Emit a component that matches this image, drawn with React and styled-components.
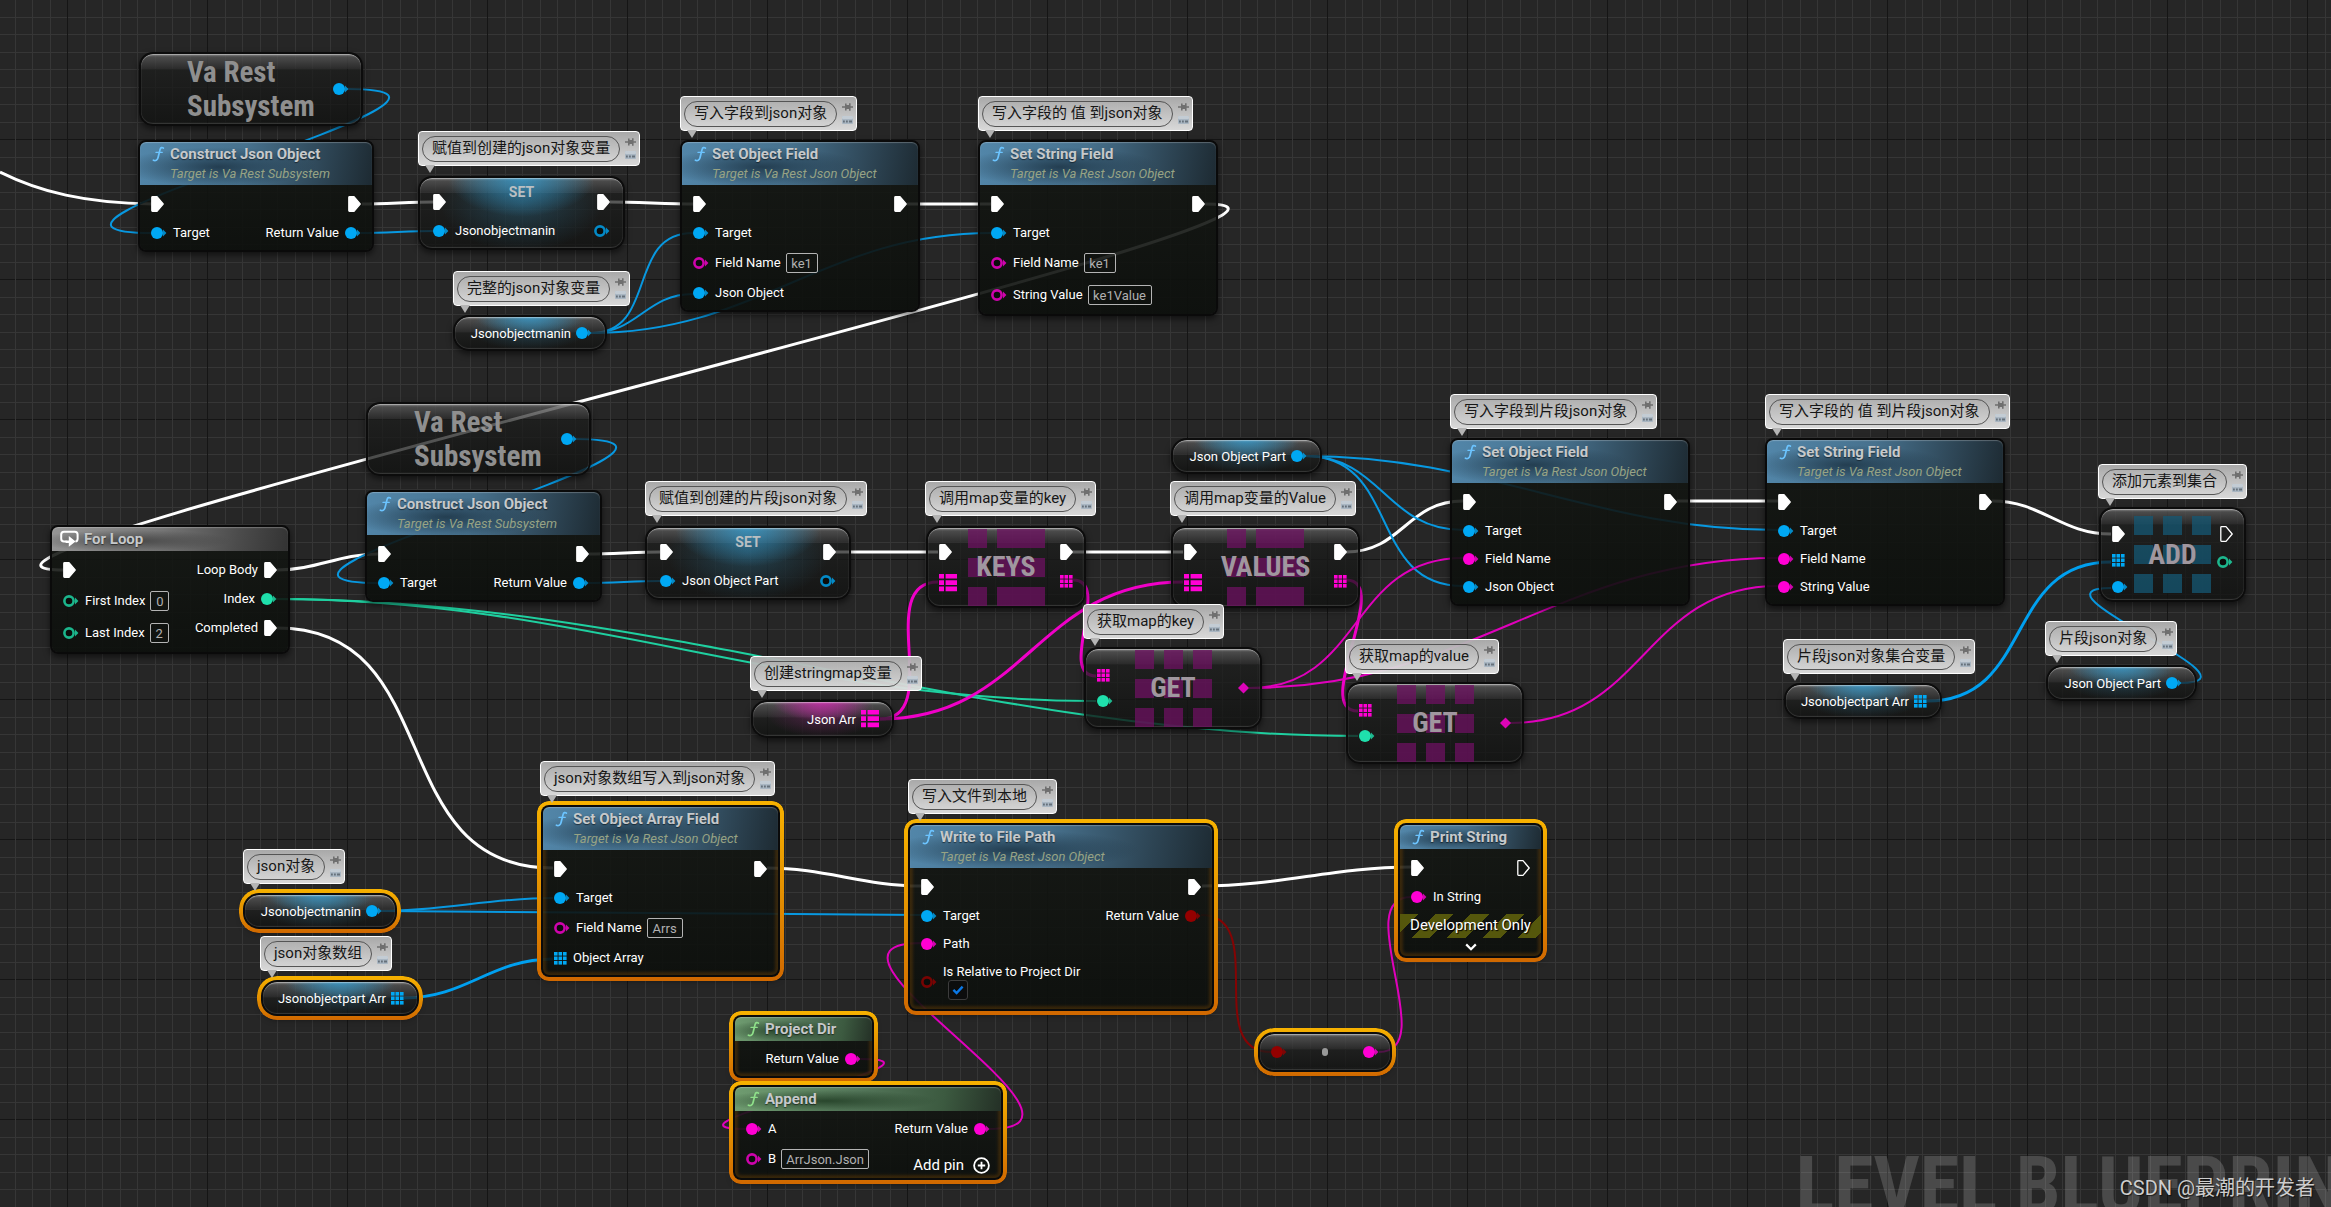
import React, { useState } from 'react';
import styled, { createGlobalStyle, css } from 'styled-components';

const GlobalStyle = createGlobalStyle`
  * {
    box-sizing: border-box;
    margin: 0;
    padding: 0;
  }

  body {
    background-color: #262626;
    color: #fff;
    font-family: Roboto, 'Noto Sans CJK SC', sans-serif;
    font-size: 13px;
    overflow: hidden;
  }

  button {
    border: 0;
    background: none;
    color: inherit;
    font: inherit;
    cursor: pointer;
  }
`;

const colors = {
  exec: '#ffffff',
  object: '#00a8f4',
  string: '#ff00d4',
  int: '#1fe0ac',
  bool: '#940000',
};

const headers = {
  blue: ['#5286a9', '#47718d', '#2e4656', '#1d2a32', '#1a3040'],
  green: ['#6f9c70', '#54775a', '#3c5a40', '#243026', '#1d3820'],
  gray: ['#959595', '#777777', '#4c4c4c', '#333333', '#3a3a3a'],
};

const tints = {
  blue: '54, 160, 212',
  pink: '214, 40, 180',
};

// Grid: one 140px tile holds a dark line and seven light ones
const gridSteps = [18, 35, 53, 70, 88, 105, 123];
const gridLines = (direction) =>
  `linear-gradient(${direction}, #151515 0 1px, transparent 1px, ${gridSteps
    .map((s) => `transparent ${s}px, #363636 ${s}px ${s + 1}px, transparent ${s + 1}px`)
    .join(', ')})`;

const Graph = styled.main`
  position: relative;
  min-height: 100vh;
  overflow: hidden;
  background-color: #262626;
  background-image: ${gridLines('to right')}, ${gridLines('to bottom')};
  background-size: 140px 140px;
  background-position: 67px 139px;
`;

const Wires = styled.svg`
  position: absolute;
  inset: 0;
  width: 100%;
  height: 100%;
  fill: none;
`;

const selectedFrame = css`
  &::after {
    content: '';
    position: absolute;
    inset: -6px;
    padding: 4px;
    border-radius: ${(p) => (p.$radius || 8) + 4}px;
    background: linear-gradient(#f7b200, #e39000 50%, #d06800);
    mask: linear-gradient(#000 0 0) content-box exclude, linear-gradient(#000 0 0);
    pointer-events: none;
  }
`;

const placed = css`
  position: absolute;
  left: ${(p) => p.$x}px;
  top: ${(p) => p.$y}px;
  width: ${(p) => p.$w}px;
`;

const Node = styled.section`
  ${placed}
  display: flex;
  flex-direction: column;
  border: 2px solid #0a0a0a;
  border-radius: 8px;
  background: linear-gradient(rgba(20, 23, 19, 0.88), rgba(12, 15, 12, 0.91));
  background-clip: padding-box;
  box-shadow: 0 3px 6px rgba(0, 0, 0, 0.55)
    ${(p) => p.$selected && ', inset 0 0 3px 3px rgba(150, 85, 0, 0.3)'};
  ${(p) => p.$selected && selectedFrame}
`;

const NodeHeader = styled.header`
  display: flex;
  gap: 5px;
  height: ${(p) => (p.$tall ? 43 : 24)}px;
  padding: ${(p) => (p.$icon === 'loop' ? '3px 8px' : '3px 12px')};
  border-radius: 6px 6px 0 0;
  box-shadow: inset 0 1px 1px rgba(255, 255, 255, 0.25);
  background: ${({ $color }) => {
    const [a, b, c, d, shade] = headers[$color];
    return `radial-gradient(ellipse 42% 46% at 34% 58%, ${shade}cc, transparent),
      linear-gradient(100deg, ${a}, ${b} 45%, ${c} 78%, ${d})`;
  }};
`;

const NodeTitle = styled.h2`
  color: #c6c9cb;
  font-size: 15px;
  font-weight: 700;
  line-height: 19px;
  text-shadow: 0 1px 1px rgba(0, 0, 0, 0.5);
  white-space: nowrap;
`;

const NodeSubtitle = styled.p`
  color: #97a384;
  font-size: 13px;
  font-style: italic;
  line-height: 19px;
  white-space: nowrap;
`;

const NodeBody = styled.div`
  display: flex;
  justify-content: space-between;
  padding: 4px 11px 3px;
`;

const PinColumn = styled.div`
  display: flex;
  flex-direction: column;
  align-items: ${(p) => (p.$out ? 'flex-end' : 'flex-start')};
`;

const rowHeights = { exec: 30, plain: 28, input: 32, check: 48 };

const PinRow = styled.label`
  display: flex;
  flex-direction: ${(p) => (p.$out ? 'row-reverse' : 'row')};
  align-items: center;
  gap: 6px;
  height: ${(p) => p.$height || rowHeights[p.$row]}px;
  line-height: 16px;
  white-space: nowrap;
`;

const ValueInput = styled.input`
  width: ${(p) => p.$w}px;
  height: 20px;
  margin-left: -1px;
  border: 1px solid #b4b4b4;
  border-radius: 2px;
  background: transparent;
  color: #b0b0b0;
  font: 13px/18px Roboto, sans-serif;
  text-align: center;
  outline: 0;
`;

const CheckLabel = styled.span`
  display: flex;
  flex-direction: column;
`;

const CheckBoxWrap = styled.span`
  display: grid;
  justify-items: start;
  align-items: center;

  & > * {
    grid-area: 1 / 1;
  }

  svg {
    margin-left: 9px;
    pointer-events: none;
  }
`;

const Checkbox = styled.input`
  appearance: none;
  width: 20px;
  height: 20px;
  margin-left: 5px;
  border: 1px solid #3c3c3c;
  border-radius: 3px;
  background-color: #0c0d0d;
`;

const DevBanner = styled.p`
  height: 24px;
  background: repeating-linear-gradient(
    135deg,
    #55570c 0 13px,
    transparent 13px 25px
  );
  font-size: 15px;
  line-height: 23px;
  text-align: center;
  text-shadow: 1px 1px 1px #000;
  white-space: nowrap;
`;

const ExpandButton = styled.button`
  display: flex;
  justify-content: center;
  align-items: center;
  height: 18px;
`;

const AddPinButton = styled.button`
  display: flex;
  align-items: center;
  gap: 9px;
  height: 32px;
  padding-top: 12px;
  font-size: 15px;
`;

// Rounded nodes without a header: variables, setters and array operators
const GlossNode = styled.section`
  ${placed}
  display: flex;
  height: ${(p) => p.$h}px;
  border: 2px solid #0c0c0c;
  border-radius: ${(p) => p.$radius || 14}px;
  background: ${(p) =>
      p.$tint
        ? `radial-gradient(ellipse 36% 55% at 50% 0, rgba(${tints[p.$tint]}, 0.75), transparent),
           radial-gradient(ellipse 40% 70% at 50% 35%, rgba(${tints[p.$tint]}, 0.28), transparent),`
        : ''}
    linear-gradient(
      rgba(140, 140, 140, 0.85),
      rgba(84, 84, 84, 0.8) 3px,
      rgba(44, 44, 44, 0.75) 15px,
      rgba(28, 29, 28, 0.72) 15px,
      rgba(16, 17, 16, 0.78)
    );
  background-clip: padding-box;
  box-shadow: 0 3px 6px rgba(0, 0, 0, 0.55), inset 0 1px 1px rgba(255, 255, 255, 0.4),
    inset 0 -1px 1px rgba(160, 160, 160, 0.25);
  ${(p) => p.$selected && selectedFrame}
`;

const VariableBody = styled.div`
  flex: 1;
  display: flex;
  justify-content: flex-end;
  align-items: center;
  gap: 5px;
  padding-right: 13px;
  white-space: nowrap;
`;

const BigTitle = styled.h2`
  color: #8f8f8f;
  font-family: 'Roboto Condensed', 'Liberation Sans Narrow', Roboto, sans-serif;
  font-size: 29px;
  font-weight: 700;
  line-height: 34px;
`;

const SubsystemBody = styled.div`
  flex: 1;
  display: flex;
  justify-content: space-between;
  align-items: center;
  padding: 0 12px 0 46px;
`;

const SetterBody = styled.div`
  flex: 1;
  padding: 8px 13px 0;
`;

const SetterRow = styled.div`
  display: flex;
  justify-content: space-between;
  align-items: center;
  height: ${(p) => p.$height}px;
`;

const SetterTitle = styled.h2`
  align-self: flex-start;
  color: #b9bfc2;
  font-size: 14px;
  font-weight: 700;
  line-height: 12px;
`;

const OperatorBody = styled.div`
  flex: 1;
  display: flex;
  justify-content: space-between;
  padding: 0 11px;
`;

const OperatorPins = styled(PinColumn)`
  flex: 1;
  padding-top: ${(p) => p.$top}px;
`;

const OperatorFace = styled.div`
  display: grid;
  grid-template-columns: 77px;
  place-items: center;

  & > * {
    grid-area: 1 / 1;
  }
`;

const Mosaic = styled.div`
  display: grid;
  grid-template-columns: ${(p) => (p.$map ? '19px 48px' : 'repeat(3, 19px)')};
  grid-auto-rows: 19px;
  gap: 10px;

  span {
    background-color: ${(p) => (p.$color === 'blue' ? 'rgba(21, 88, 116, 0.75)' : 'rgba(112, 17, 100, 0.72)')};
  }
`;

const OperatorTitle = styled(BigTitle)`
  color: #a0979f;
  font-size: 28px;
`;

const ConvertBody = styled.div`
  flex: 1;
  display: flex;
  justify-content: space-between;
  align-items: center;
  padding: 0 11px;
`;

const ConvertDot = styled.span`
  width: 6px;
  height: 8px;
  border-radius: 3px;
  background-color: #999;
`;

const Bubble = styled.aside`
  position: absolute;
  left: ${(p) => p.$x}px;
  top: ${(p) => p.$y}px;
  display: flex;
  align-items: center;
  gap: 5px;
  height: 35px;
  padding: 0 2px 0 3px;
  border: 1px solid #fff;
  border-radius: 4px;
  background: linear-gradient(rgba(176, 176, 176, 0.95), rgba(226, 226, 226, 0.95));

  &::after {
    content: '';
    position: absolute;
    left: 6px;
    top: 100%;
    z-index: 1;
    border: 5px solid transparent;
    border-top: 8px solid #b4b4b4;
    border-bottom: 0;
  }
`;

const BubbleText = styled.p`
  height: 26px;
  padding: 0 9px;
  border: 1px solid #555;
  border-radius: 13px;
  color: #161616;
  font-size: 15px;
  line-height: 23px;
  white-space: nowrap;
`;

const BubbleTools = styled.div`
  display: flex;
  flex-direction: column;
  gap: 5px;
  width: 12px;

  button {
    display: flex;
    height: 8px;
  }
`;

const GraphKind = styled.p`
  position: absolute;
  left: 1796px;
  top: 1138px;
  color: rgba(255, 255, 255, 0.17);
  font-family: 'Roboto Condensed', 'Liberation Sans Narrow', Roboto, sans-serif;
  font-size: 80px;
  font-weight: 700;
  line-height: 96px;
  white-space: nowrap;
`;

const Credit = styled.p`
  position: absolute;
  right: 16px;
  bottom: 5px;
  color: #cdcdcd;
  font-size: 20px;
  line-height: 28px;
  text-shadow: 1px 1px 1px rgba(0, 0, 0, 0.6);
`;

const ExecPin = ({ open }) => (
  <svg width="13" height="16" viewBox="0 0 13 16">
    <path
      d="M1.5 .7H6L12.2 8 6 15.3H1.5Q.8 15.3 .8 14.6V1.4Q.8 .7 1.5 .7Z"
      fill={open ? 'none' : '#fff'}
      stroke="#fff"
      strokeWidth="1.3"
      strokeLinejoin="round"
    />
  </svg>
);

const DataPin = ({ color, open }) => (
  <svg width="16" height="14" viewBox="0 0 16 14">
    <path d="M12 3.4 15.4 7 12 10.6Z" fill={color} opacity=".8" />
    {open ? (
      <circle cx="6" cy="7" r="4.6" fill="#0b0d0b" stroke={color} strokeWidth="2.6" strokeOpacity=".8" />
    ) : (
      <circle cx="6" cy="7" r="6" fill={color} />
    )}
  </svg>
);

const ArrayPin = ({ color }) => (
  <svg width="13" height="13" viewBox="0 0 13 13" fill={color}>
    {[0, 4.5, 9].map((y) =>
      [0, 4.5, 9].map((x) => <rect key={`${x}-${y}`} x={x} y={y} width="3.6" height="3.6" />)
    )}
  </svg>
);

const MapPin = ({ color }) => (
  <svg width="18" height="18" viewBox="0 0 18 18" fill={color}>
    {[0, 6.3, 12.6].map((y) => (
      <path key={y} d={`M0 ${y}H5V${y + 4.6}H0ZM6.6 ${y}H18V${y + 4.6}H6.6Z`} />
    ))}
  </svg>
);

const DiamondPin = ({ color }) => (
  <svg width="11" height="12" viewBox="0 0 11 12">
    <path d="M5.5 .4 11 6 5.5 11.6 0 6Z" fill={color} opacity=".85" />
  </svg>
);

const Pin = ({ type, color, open }) => {
  if (type === 'exec') return <ExecPin open={open} />;
  if (type === 'array') return <ArrayPin color={colors[color]} />;
  if (type === 'map') return <MapPin color={colors[color]} />;
  if (type === 'diamond') return <DiamondPin color={colors[color]} />;
  return <DataPin color={colors[color]} open={open} />;
};

const FunctionIcon = ({ color }) => (
  <svg width="13" height="18" viewBox="0 0 13 18" fill="none" stroke={color} strokeLinecap="round">
    <path d="M11.4 3.2C10.2 2 8.6 2.4 8.1 4.4L6 12.8C5.4 15.2 3.4 16.2 1.4 15.2" strokeWidth="1.7" />
    <path d="M4 7.4H10.2" strokeWidth="1.3" />
  </svg>
);

const LoopIcon = () => (
  <svg width="19" height="17" viewBox="0 0 19 17">
    <path
      d="M6.5 11.6H4Q1.2 11.6 1.2 8.8V4.6Q1.2 1.8 4 1.8H14.8Q17.6 1.8 17.6 4.6V8.8Q17.6 11.4 15.4 11.6"
      fill="none"
      stroke="#fff"
      strokeWidth="2"
    />
    <path d="M8.8 6 15.6 11.4 8.8 16.8V13H5.6V10.6H8.8Z" fill="#fff" />
  </svg>
);

const PushPinIcon = () => (
  <svg width="11" height="8" viewBox="0 0 11 8" fill="#6f6f6f">
    <path d="M0 3.3H3V.6H4.6V2H7V.2H8.6V3.2H11V4.8H8.6V7.8H7V6H4.6V7.4H3V4.7H0Z" />
  </svg>
);

const VisibilityIcon = () => (
  <svg width="11" height="8" viewBox="0 0 11 8">
    <rect width="11" height="8" rx="1" fill="#a9b6c2" />
    <rect width="11" height="3" rx="1" fill="#c3ccd4" />
    <path d="M1 4.6h1.8v1.8H1zM4 4.6h1.8v1.8H4zM7 4.6h3v1.8H7z" fill="#66717b" />
  </svg>
);

const Comment = ({ x, y, children }) => (
  <Bubble $x={x} $y={y}>
    <BubbleText>{children}</BubbleText>
    <BubbleTools>
      <button type="button" aria-label="Pin">
        <PushPinIcon />
      </button>
      <button type="button" aria-label="Toggle">
        <VisibilityIcon />
      </button>
    </BubbleTools>
  </Bubble>
);

const CheckField = ({ label }) => {
  const [checked, setChecked] = useState(true);

  return (
    <CheckLabel>
      {label}
      <CheckBoxWrap>
        <Checkbox type="checkbox" checked={checked} onChange={() => setChecked(!checked)} />
        {checked && (
          <svg width="12" height="10" viewBox="0 0 12 10" fill="none" stroke="#0a78e6" strokeWidth="2.4">
            <path d="M1.4 4.8 4.6 8 10.6 1.6" />
          </svg>
        )}
      </CheckBoxWrap>
    </CheckLabel>
  );
};

const PinLine = ({ pin, out }) => {
  const kind = pin.check ? 'check' : pin.value ? 'input' : pin.type === 'exec' ? 'exec' : 'plain';

  return (
    <PinRow as={pin.value || pin.check ? 'label' : 'div'} $row={kind} $out={out}>
      <Pin {...pin} />
      {pin.check ? <CheckField label={pin.label} /> : pin.label && <span>{pin.label}</span>}
      {pin.value && <ValueInput defaultValue={pin.value} $w={pin.width} />}
    </PinRow>
  );
};

const FunctionNode = ({ x, y, w, color = 'blue', title, subtitle, icon, inputs = [], outputs = [], selected, addPin, children }) => (
  <Node $x={x} $y={y} $w={w} $selected={selected}>
    <NodeHeader $color={color} $tall={!!subtitle} $icon={icon}>
      {icon === 'loop' ? <LoopIcon /> : <FunctionIcon color={color === 'green' ? '#8fe08a' : '#6cc4ff'} />}
      <div>
        <NodeTitle>{title}</NodeTitle>
        {subtitle && <NodeSubtitle>{subtitle}</NodeSubtitle>}
      </div>
    </NodeHeader>
    <NodeBody>
      <PinColumn>
        {inputs.map((pin, i) => (
          <PinLine key={i} pin={pin} />
        ))}
      </PinColumn>
      <PinColumn $out>
        {outputs.map((pin, i) => (
          <PinLine key={i} pin={pin} out />
        ))}
        {addPin && (
          <AddPinButton type="button">
            Add pin
            <svg width="17" height="17" viewBox="0 0 17 17" fill="none" stroke="#fff" strokeWidth="1.8">
              <circle cx="8.5" cy="8.5" r="7.4" />
              <path d="M8.5 4.8V12.2M4.8 8.5H12.2" />
            </svg>
          </AddPinButton>
        )}
      </PinColumn>
    </NodeBody>
    {children}
  </Node>
);

const SubsystemNode = ({ x, y, w }) => (
  <GlossNode $x={x} $y={y} $w={w} $h={74}>
    <SubsystemBody>
      <BigTitle>
        Va Rest
        <br />
        Subsystem
      </BigTitle>
      <Pin color="object" />
    </SubsystemBody>
  </GlossNode>
);

const SetterNode = ({ x, y, w, label }) => (
  <GlossNode $x={x} $y={y} $w={w} $h={74} $tint="blue">
    <SetterBody>
      <SetterRow $height={32}>
        <Pin type="exec" />
        <SetterTitle>SET</SetterTitle>
        <Pin type="exec" />
      </SetterRow>
      <SetterRow $height={26}>
        <PinRow as="div" $height={26}>
          <Pin color="object" />
          <span>{label}</span>
        </PinRow>
        <Pin color="object" open />
      </SetterRow>
    </SetterBody>
  </GlossNode>
);

const VariableNode = ({ x, y, w, h = 36, label, type, color = 'object', tint = 'blue', selected }) => (
  <GlossNode $x={x} $y={y} $w={w} $h={h} $radius={16} $tint={tint} $selected={selected}>
    <VariableBody>
      <span>{label}</span>
      <Pin type={type} color={color} />
    </VariableBody>
  </GlossNode>
);

const OperatorNode = ({ x, y, w, h = 82, title, map, color = 'pink', top, inputs, outputs, outTop = top }) => (
  <GlossNode $x={x} $y={y} $w={w} $h={h}>
    <OperatorBody>
      <OperatorPins $top={top}>
        {inputs.map((pin, i) => (
          <PinRow as="div" key={i} $height={pin.h}>
            <Pin {...pin} />
          </PinRow>
        ))}
      </OperatorPins>
      <OperatorFace>
        <Mosaic $map={map} $color={color}>
          {Array.from({ length: map ? 6 : 9 }, (_, i) => (
            <span key={i} />
          ))}
        </Mosaic>
        <OperatorTitle>{title}</OperatorTitle>
      </OperatorFace>
      <OperatorPins $out $top={outTop}>
        {outputs.map((pin, i) => (
          <PinRow as="div" key={i} $height={pin.h}>
            <Pin {...pin} />
          </PinRow>
        ))}
      </OperatorPins>
    </OperatorBody>
  </GlossNode>
);

// Horizontal tangents grow with the distance; backward wires loop out further
const wirePath = ([x1, y1, x2, y2]) => {
  const dx = x2 - x1;
  const dy = Math.abs(y2 - y1);
  const tangent =
    dx >= 0 ? Math.min(dx, 1000) + Math.min(dy, 1000) : 2 * Math.min(-dx, 200) + 1.5 * Math.min(dy, 200);
  const c = tangent / 3;
  return `M${x1} ${y1}C${x1 + c} ${y1} ${x2 - c} ${y2} ${x2} ${y2}`;
};

const wires = [
  { color: '#fff', width: 3, lines: [
    [362, 204, 434, 202], [610, 202, 694, 204], [907, 204, 991, 204], [1205, 204, 64, 570],
    [277, 570, 378, 554], [589, 554, 660, 552], [834, 552, 938, 552], [1071, 552, 1183, 552],
    [1346, 552, 1463, 501], [1677, 501, 1778, 501], [1992, 501, 2111, 534], [277, 628, 553, 868],
    [767, 868, 921, 886], [1202, 886, 1411, 867],
  ] },
  { color: '#0898e0', width: 2, lines: [
    [347, 89, 153, 233], [361, 233, 434, 231], [591, 333, 693, 233], [591, 333, 693, 294],
    [591, 333, 991, 233], [574, 439, 380, 583], [588, 583, 660, 581], [1305, 456, 1463, 530],
    [1305, 456, 1463, 586], [1305, 456, 1778, 530], [2180, 683, 2111, 588], [381, 911, 553, 898],
    [381, 911, 921, 915],
  ] },
  { color: '#00a0f0', width: 3, lines: [[1927, 701, 2111, 562], [404, 998, 553, 959]] },
  { color: '#1fd0a0', width: 2, lines: [[276, 599, 1096, 701], [276, 599, 1358, 736]] },
  { color: '#f000c8', width: 3, lines: [
    [880, 719, 938, 582], [880, 719, 1183, 582], [1073, 580, 1096, 676], [1346, 580, 1358, 711],
  ] },
  { color: '#e000bc', width: 2, lines: [
    [1249, 688, 1463, 558], [1249, 688, 1778, 558], [1510, 723, 1778, 586], [989, 1129, 921, 943],
    [861, 1059, 746, 1129], [1379, 1052, 1411, 897],
  ] },
  { color: '#840404', width: 2, lines: [[1201, 915, 1271, 1052]] },
];

const exec = { type: 'exec' };
const target = { color: 'object', label: 'Target' };
const returnObject = { color: 'object', label: 'Return Value' };
const returnString = { color: 'string', label: 'Return Value' };
const restObject = 'Target is Va Rest Json Object';

const App = () => {
  return (
    <>
      <GlobalStyle />
      <Graph>
        <Wires>
          <path d="M0 172C40 192 85 203 152 204" stroke="#fff" strokeWidth="3" />
          {wires.map(({ color, width, lines }) =>
            lines.map((line) => (
              <path key={line.join()} d={wirePath(line)} stroke={color} strokeWidth={width} />
            ))
          )}
        </Wires>

        <GraphKind>LEVEL BLUEPRINT</GraphKind>

        {/* Whole json object */}
        <SubsystemNode x={139} y={52} w={224} />
        <FunctionNode x={138} y={140} w={236} title="Construct Json Object" subtitle="Target is Va Rest Subsystem" inputs={[exec, target]} outputs={[exec, returnObject]} />
        <SetterNode x={418} y={176} w={207} label="Jsonobjectmanin" />
        <Comment x={418} y={131}>赋值到创建的json对象变量</Comment>
        <VariableNode x={453} y={315} w={154} label="Jsonobjectmanin" />
        <Comment x={453} y={271}>完整的json对象变量</Comment>
        <FunctionNode
          x={680} y={140} w={240} title="Set Object Field" subtitle={restObject}
          inputs={[exec, target, { color: 'string', open: true, label: 'Field Name', value: 'ke1', width: 32 }, { color: 'object', label: 'Json Object' }]}
          outputs={[exec]}
        />
        <Comment x={680} y={96}>写入字段到json对象</Comment>
        <FunctionNode
          x={978} y={140} w={240} title="Set String Field" subtitle={restObject}
          inputs={[exec, target, { color: 'string', open: true, label: 'Field Name', value: 'ke1', width: 32 }, { color: 'string', open: true, label: 'String Value', value: 'ke1Value', width: 64 }]}
          outputs={[exec]}
        />
        <Comment x={978} y={96}>写入字段的 值 到json对象</Comment>

        {/* Loop over the map */}
        <FunctionNode
          x={50} y={525} w={240} color="gray" icon="loop" title="For Loop"
          inputs={[exec, { color: 'int', open: true, label: 'First Index', value: '0', width: 19 }, { color: 'int', open: true, label: 'Last Index', value: '2', width: 19 }]}
          outputs={[{ type: 'exec', label: 'Loop Body' }, { color: 'int', label: 'Index' }, { type: 'exec', label: 'Completed' }]}
        />
        <SubsystemNode x={366} y={402} w={225} />
        <FunctionNode x={365} y={490} w={237} title="Construct Json Object" subtitle="Target is Va Rest Subsystem" inputs={[exec, target]} outputs={[exec, returnObject]} />
        <SetterNode x={645} y={526} w={206} label="Json Object Part" />
        <Comment x={645} y={481}>赋值到创建的片段json对象</Comment>
        <OperatorNode
          x={926} y={526} w={160} title="KEYS" map top={9}
          inputs={[{ type: 'exec', h: 30 }, { type: 'map', color: 'string', h: 32 }]}
          outputs={[{ type: 'exec', h: 30 }, { type: 'array', color: 'string', h: 28 }]}
        />
        <Comment x={925} y={481}>调用map变量的key</Comment>
        <OperatorNode
          x={1171} y={526} w={189} title="VALUES" map top={9}
          inputs={[{ type: 'exec', h: 30 }, { type: 'map', color: 'string', h: 32 }]}
          outputs={[{ type: 'exec', h: 30 }, { type: 'array', color: 'string', h: 28 }]}
        />
        <VariableNode x={1171} y={438} w={151} label="Json Object Part" />
        <Comment x={1170} y={481}>调用map变量的Value</Comment>
        <VariableNode x={751} y={700} w={143} h={38} label="Json Arr" type="map" color="string" tint="pink" />
        <Comment x={750} y={656}>创建stringmap变量</Comment>
        <OperatorNode
          x={1084} y={647} w={178} title="GET" top={14} outTop={26}
          inputs={[{ type: 'array', color: 'string', h: 25 }, { color: 'int', h: 25 }]}
          outputs={[{ type: 'diamond', color: 'string', h: 26 }]}
        />
        <Comment x={1083} y={604}>获取map的key</Comment>
        <OperatorNode
          x={1346} y={682} w={178} title="GET" top={14} outTop={26}
          inputs={[{ type: 'array', color: 'string', h: 25 }, { color: 'int', h: 25 }]}
          outputs={[{ type: 'diamond', color: 'string', h: 26 }]}
        />
        <Comment x={1345} y={639}>获取map的value</Comment>
        <FunctionNode
          x={1450} y={438} w={240} title="Set Object Field" subtitle={restObject}
          inputs={[exec, target, { color: 'string', label: 'Field Name' }, { color: 'object', label: 'Json Object' }]}
          outputs={[exec]}
        />
        <Comment x={1450} y={394}>写入字段到片段json对象</Comment>
        <FunctionNode
          x={1765} y={438} w={240} title="Set String Field" subtitle={restObject}
          inputs={[exec, target, { color: 'string', label: 'Field Name' }, { color: 'string', label: 'String Value' }]}
          outputs={[exec]}
        />
        <Comment x={1765} y={394}>写入字段的 值 到片段json对象</Comment>
        <OperatorNode
          x={2099} y={507} w={147} h={95} title="ADD" color="blue" top={11}
          inputs={[{ type: 'exec', h: 28 }, { type: 'array', color: 'object', h: 27 }, { color: 'object', h: 27 }]}
          outputs={[{ type: 'exec', open: true, h: 28 }, { color: 'int', open: true, h: 27 }]}
        />
        <Comment x={2098} y={464}>添加元素到集合</Comment>
        <VariableNode x={1784} y={683} w={158} label="Jsonobjectpart Arr" type="array" />
        <Comment x={1783} y={639}>片段json对象集合变量</Comment>
        <VariableNode x={2046} y={665} w={151} label="Json Object Part" />
        <Comment x={2045} y={621}>片段json对象</Comment>

        {/* Write the file */}
        <VariableNode x={243} y={893} w={154} label="Jsonobjectmanin" selected />
        <Comment x={243} y={849}>json对象</Comment>
        <VariableNode x={261} y={980} w={158} label="Jsonobjectpart Arr" type="array" selected />
        <Comment x={260} y={936}>json对象数组</Comment>
        <FunctionNode
          x={541} y={805} w={239} title="Set Object Array Field" subtitle={restObject} selected
          inputs={[exec, target, { color: 'string', open: true, label: 'Field Name', value: 'Arrs', width: 36 }, { type: 'array', color: 'object', label: 'Object Array' }]}
          outputs={[exec]}
        />
        <Comment x={540} y={761}>json对象数组写入到json对象</Comment>
        <FunctionNode
          x={908} y={823} w={306} title="Write to File Path" subtitle={restObject} selected
          inputs={[exec, target, { color: 'string', label: 'Path' }, { color: 'bool', open: true, label: 'Is Relative to Project Dir', check: true }]}
          outputs={[exec, { color: 'bool', label: 'Return Value' }]}
        />
        <Comment x={908} y={779}>写入文件到本地</Comment>
        <FunctionNode x={733} y={1015} w={141} color="green" title="Project Dir" outputs={[returnString]} selected />
        <FunctionNode
          x={733} y={1085} w={270} color="green" title="Append" selected addPin
          inputs={[{ color: 'string', label: 'A' }, { color: 'string', open: true, label: 'B', value: 'ArrJson.Json', width: 88 }]}
          outputs={[returnString]}
        />
        <FunctionNode x={1398} y={823} w={145} title="Print String" inputs={[exec, { color: 'string', label: 'In String' }]} outputs={[{ type: 'exec', open: true }]} selected>
          <DevBanner>Development Only</DevBanner>
          <ExpandButton type="button" aria-label="Expand">
            <svg width="12" height="8" viewBox="0 0 12 8" fill="none" stroke="#fff" strokeWidth="2.2">
              <path d="M1.2 1.4 6 6.2 10.8 1.4" />
            </svg>
          </ExpandButton>
        </FunctionNode>
        <GlossNode $x={1258} $y={1032} $w={134} $h={40} $radius={16} $selected>
          <ConvertBody>
            <Pin color="bool" />
            <ConvertDot />
            <Pin color="string" />
          </ConvertBody>
        </GlossNode>

        <Credit>CSDN @最潮的开发者</Credit>
      </Graph>
    </>
  );
};

export default App;
